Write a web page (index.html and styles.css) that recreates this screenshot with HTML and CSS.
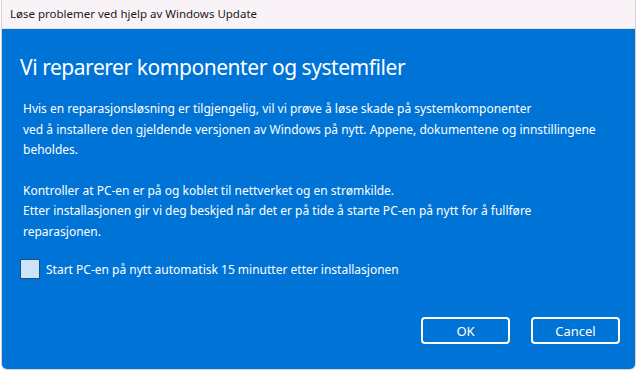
FILE: index.html
```html
<!DOCTYPE html>
<html lang="no">
<head>
    <meta charset="UTF-8">
    <title>Løse problemer ved hjelp av Windows Update</title>
    <link rel="stylesheet" href="styles.css">
</head>
<body>
    <div class="window">
        <div class="title-bar">Løse problemer ved hjelp av Windows Update</div>
        <div class="content">
            <h1>Vi reparerer komponenter og systemfiler</h1>
            <p>Hvis en reparasjonsløsning er tilgjengelig, vil vi prøve å løse skade på systemkomponenter<br>
               ved å installere den gjeldende versjonen av Windows på nytt. Appene, dokumentene og innstillingene<br>
               beholdes.</p>
            <p>Kontroller at PC-en er på og koblet til nettverket og en strømkilde.<br>
               Etter installasjonen gir vi deg beskjed når det er på tide å starte PC-en på nytt for å fullføre<br>
               reparasjonen.</p>
            <label class="check-row">
                <span class="check-box"></span>
                <span>Start PC-en på nytt automatisk 15 minutter etter installasjonen</span>
            </label>
            <div class="button-row">
                <button class="dialog-button">OK</button>
                <button class="dialog-button">Cancel</button>
            </div>
        </div>
    </div>
</body>
</html>
```

FILE: styles.css
```css
body {
    margin: 0;
    background-color: #ffffff;
    font-family: 'Noto Sans', 'Open Sans', sans-serif;
}

.window {
    width: 633px;
    height: 369px;
    margin: 0 0 0 1px;
    border: 1px solid #d6d2d6;
    border-top: none;
    border-radius: 0 0 6px 6px;
    overflow: hidden;
    display: flex;
    flex-direction: column;
}

.title-bar {
    height: 28px;
    background-color: #f9f3f8;
    color: #1a1a1a;
    font-size: 11.5px;
    line-height: 28px;
    padding-left: 8px;
    border-bottom: 1px solid #e6e0e6;
}

.content {
    flex: 1;
    background-color: #0073d7;
    color: #ffffff;
    padding: 0 15px 0 18px;
    display: flex;
    flex-direction: column;
}

.content h1 {
    margin: 23px 0 0 0;
    font-size: 21px;
    font-weight: normal;
    line-height: 30px;
    letter-spacing: -0.45px;
}

.content p {
    margin: 17px 0 0 3px;
    font-size: 12px;
    line-height: 20.5px;
}

.content p + p {
    margin-top: 20px;
}

.check-row {
    display: flex;
    align-items: center;
    gap: 6px;
    margin-top: 17px;
    font-size: 12px;
}

.check-box {
    width: 20px;
    height: 20px;
    background-color: #cde3f7;
    border: 1px solid #1f4f80;
    box-sizing: border-box;
}

.button-row {
    display: flex;
    justify-content: flex-end;
    gap: 21px;
    margin-top: 38px;
}

.dialog-button {
    width: 89px;
    height: 27px;
    background-color: transparent;
    border: 2px solid #ffffff;
    border-radius: 4px;
    color: #ffffff;
    font-family: inherit;
    font-size: 13px;
}
```
